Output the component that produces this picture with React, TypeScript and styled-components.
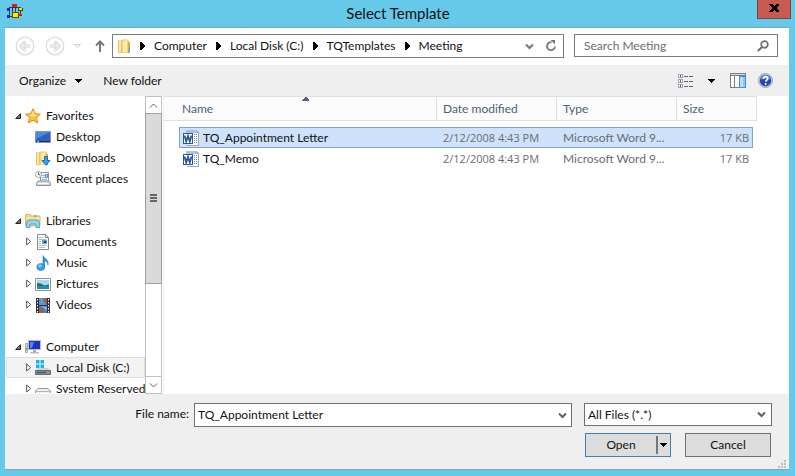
import React from "react";
import styled, { createGlobalStyle, css } from "styled-components";

const GlobalStyle = createGlobalStyle`
  * { box-sizing: border-box; }
  html, body { margin: 0; }
  body, button, input, select {
    font-family: Lato, "Open Sans", sans-serif;
    font-size: 12px;
    line-height: 16px;
    color: #111;
  }
  button, input, select { margin: 0; padding: 0; border-radius: 0; }
  svg { display: block; flex: none; }
`;

const Window = styled.div`
  display: flex;
  flex-direction: column;
  min-height: 100vh;
  padding: 0 6px 6px 5px;
  background: #66c9ea;
`;

const TitleBar = styled.header`
  display: grid;
  grid-template-columns: 34px 1fr 34px;
  height: 27px;
  margin-right: -2px;
`;

const AppIcon = styled.span`
  padding: 4px 0 0 2px;
`;

const Title = styled.h1`
  margin: 0;
  text-align: center;
  font-size: 15px;
  font-weight: 400;
  line-height: 26px;
`;

const CloseButton = styled.button`
  display: flex;
  align-items: center;
  justify-content: center;
  height: 19px;
  padding-bottom: 3px;
  border: 1px solid #6f4a49;
  border-top: 0;
  background: #c75b52;
`;

const Body = styled.main`
  display: flex;
  flex: 1;
  flex-direction: column;
  border-top: 1px solid #7fa6b5;
  border-bottom: 1px solid #7fa6b5;
  background: #efefef;
`;

const NavBar = styled.nav`
  display: flex;
  height: 37px;
  padding: 6px 11px 0 10px;
  background: #fff;
`;

const NavButtons = styled.div`
  display: flex;
  align-items: center;
  height: 24px;
  width: 97px;
`;

const PlainButton = styled.button<{ $gap?: number }>`
  display: inline-flex;
  align-items: center;
  margin-right: ${(p) => p.$gap ?? 0}px;
  border: 0;
  background: none;
  white-space: nowrap;
`;

const AddressBar = styled.div`
  display: flex;
  flex: 1;
  align-items: center;
  height: 24px;
  margin-right: 10px;
  padding: 0 6px 0 4px;
  border: 1px solid #7b7b7b;
`;

const Crumbs = styled.ol`
  display: flex;
  flex: 1;
  margin: 0;
  padding: 0 0 0 7px;
  list-style: none;
`;

const Crumb = styled.li`
  display: flex;
  align-items: center;
  gap: 9px;
  padding-right: 9px;
`;

const CrumbLink = styled.a`
  color: inherit;
  text-decoration: none;
  white-space: nowrap;
`;

const SearchBox = styled.label`
  display: flex;
  align-items: center;
  width: 204px;
  height: 23px;
  padding: 0 8px 0 9px;
  border: 1px solid #7b7b7b;
`;

const TextInput = styled.input`
  flex: 1;
  min-width: 0;
  border: 0;
  outline: 0;
  background: transparent;
  &::placeholder {
    color: #6d6d6d;
    opacity: 1;
  }
`;

const Toolbar = styled.div`
  display: flex;
  align-items: center;
  height: 31px;
  padding: 0 16px 0 14px;
`;

const Spacer = styled.span`
  flex: 1;
`;

const Content = styled.div`
  display: flex;
  flex: 1 1 0;
  min-height: 0;
  background: #fff;
`;

const Tree = styled.ul`
  width: 140px;
  height: 297px;
  margin: 0;
  padding: 9px 0 0 1px;
  overflow: hidden;
  list-style: none;
`;

const TreeGroup = styled.li`
  margin-bottom: 21px;
`;

const TreeChildren = styled.ul`
  margin: 0;
  padding: 0;
  list-style: none;
`;

const TreeRow = styled.button<{ $child?: boolean; $selected?: boolean }>`
  display: grid;
  grid-template-columns: ${(p) => (p.$child ? 9 : 10)}px 16px 1fr;
  align-items: center;
  width: 100%;
  height: 21px;
  padding: 0 0 0 ${(p) => (p.$child ? 19 : 8)}px;
  border: 1px solid ${(p) => (p.$selected ? "#dedede" : "transparent")};
  background: ${(p) => (p.$selected ? "#f3f3f3" : "transparent")};
  text-align: left;
  white-space: nowrap;
`;

const TreeLabel = styled.span`
  padding-left: 5px;
`;

const ScrollBar = styled.div`
  display: flex;
  flex-direction: column;
  width: 17px;
  border: 1px solid #c1c1c1;
`;

const ScrollButton = styled.button`
  display: flex;
  align-items: center;
  justify-content: center;
  height: 16px;
  border: 0;
  background: #fff;
`;

const ScrollTrack = styled.div`
  flex: 1;
  border-bottom: 1px solid #c1c1c1;
`;

const ScrollThumb = styled.div`
  display: flex;
  align-items: center;
  justify-content: center;
  height: 65%;
  margin: 0 -1px;
  border: 1px solid #a0a0a0;
  background: #dadada;
`;

const FileArea = styled.section`
  flex: 1;
  margin-left: 1px;
  padding-right: 32px;
  border-left: 1px solid #f2f2f2;
`;

const FileTable = styled.table`
  width: 100%;
  border-spacing: 0;
  table-layout: fixed;
  tbody::before {
    content: "";
    display: table-row;
    height: 6px;
  }
`;

const Col = styled.col<{ $w?: number }>`
  width: ${(p) => (p.$w ? `${p.$w}px` : "auto")};
`;

const HeadCell = styled.th<{ $indent?: number }>`
  height: 25px;
  padding: 0 0 0 ${(p) => p.$indent ?? 6}px;
  border: solid #e0e0e0;
  border-width: 1px 1px 1px 0;
  background: #fcfcfc;
  color: #4c607a;
  font-weight: 400;
  text-align: left;
`;

const SortHead = styled.span`
  display: grid;
  grid-template-columns: 1fr;
  align-items: center;
  height: 23px;
  > * { grid-area: 1 / 1; }
  > svg { place-self: start center; margin-right: 6px; }
`;

const edge = "#7da2ce";

const Row = styled.tr<{ $selected?: boolean }>`
  td {
    height: 21px;
    padding: 0 4px 0 6px;
    border: 1px solid transparent;
    border-width: 1px 0;
    color: #6d6d6d;
    overflow: hidden;
    text-overflow: ellipsis;
    white-space: nowrap;
  }
  td:nth-child(2) {
    padding-left: 3px;
    border-left-width: 1px;
    color: #111;
  }
  td:nth-child(5) {
    padding: 0 3px 0 0;
    border-right-width: 1px;
    text-align: right;
  }
  td:nth-child(3),
  td:nth-child(5) {
    font-family: "Open Sans", sans-serif;
    font-size: 11px;
  }
  ${(p) =>
    p.$selected &&
    css`
      td:not(:first-child):not(:last-child) {
        border-color: ${edge};
        background: #cee2fc;
      }
    `}
`;

const FileName = styled.span`
  display: flex;
  align-items: center;
  gap: 4px;
`;

const Footer = styled.form`
  display: grid;
  grid-template-columns: 185px minmax(0, 1fr) 188px;
  grid-template-rows: 24px 24px;
  row-gap: 6px;
  height: 75px;
  padding: 9px 17px 0 0;
`;

const FieldLabel = styled.label`
  justify-self: end;
  margin-right: 1px;
  line-height: 22px;
`;

const Combo = styled.div`
  display: flex;
  align-items: center;
  margin: 0 12px 0 4px;
  padding: 0 4px 0 3px;
  border: 1px solid #707070;
  background: #fff;
`;

const FilterField = styled.div`
  display: grid;
  grid-template-columns: 1fr 14px;
  align-items: center;
  height: 23px;
  border: 1px solid #707070;
  background: #fff;
  > svg {
    grid-area: 1 / 2;
    pointer-events: none;
  }
`;

const Filter = styled.select`
  grid-area: 1 / 1 / 2 / 3;
  height: 21px;
  padding-left: 3px;
  border: 0;
  outline: 0;
  appearance: none;
  background: transparent;
`;

const Actions = styled.div`
  display: grid;
  grid-column: 3;
  grid-template-columns: 86px 86px;
  gap: 14px;
  margin-left: 1px;
`;

const SplitButton = styled.div`
  display: flex;
  border: 1px solid #3c7fb1;
  background: #ddd;
`;

const OpenButton = styled.button`
  flex: 1;
  border: 0;
  background: none;
`;

const OpenMenuButton = styled.button`
  display: flex;
  align-items: center;
  width: 14px;
  margin: 2px 0;
  padding-left: 1px;
  border: 0;
  border-left: 2px solid #777;
  background: none;
`;

const CancelButton = styled.button`
  border: 1px solid #707070;
  background: #ddd;
`;

const Grip = styled.span`
  grid-column: 3;
  grid-row: 3;
  justify-self: end;
  margin: -3px -15px 0 0;
`;

/* ---------- icons ---------- */

const Icon = ({ w = 16, h = 16, crisp, children }: { w?: number; h?: number; crisp?: boolean; children: React.ReactNode }) => (
  <svg width={w} height={h} viewBox={`0 0 ${w} ${h}`} fill="none" aria-hidden="true" shapeRendering={crisp ? "crispEdges" : undefined}>
    {children}
  </svg>
);

const NetIcon = () => (
  <Icon w={17} h={16} crisp>
    <path d="M2.500 5v8M2 3.500h12M5.500 2v8M13.500 6v5M8.500 3v6M2 12.500h8" stroke="#333a44" />
    <path d="M5 0h5v3H5z" fill="#e01818" />
    <path d="M11 4h5v3h-5z" fill="#4c4400" />
    <path d="M12 4h3v2h-3z" fill="#f5e400" />
    <path d="M5 8h7v6H5z" fill="#5a5200" />
    <path d="M6 9h5v4H6z" fill="#ffe800" />
    <path d="M0 4h3v3H0zM0 11h3v3H0z" fill="#1a2cb8" />
    <path d="M12 10h3v2h-3z" fill="#e01818" />
  </Icon>
);

const CloseIcon = () => (
  <Icon w={10} h={8} crisp>
    <path d="M0 0h3l2 2 2-2h3v1L7 4l3 3v1H7L5 6 3 8H0V7l3-3-3-3z" fill="#000" />
  </Icon>
);

const CircleArrow = ({ flip }: { flip?: boolean }) => (
  <Icon w={20} h={20}>
    <circle cx="10" cy="10" r="8.8" stroke="#d9d9d9" strokeWidth="1.2" />
    <g transform={flip ? "matrix(-1 0 0 1 20 0)" : undefined}>
      <path d="M10.500 5.500 6 10l4.500 4.500M6.500 10H15" stroke="#d4d4d4" strokeWidth="3" />
      <path d="M10.500 5.500 6 10l4.500 4.500M6 10h8.500" stroke="#fff" />
    </g>
  </Icon>
);

const SmallTriangle = () => (
  <Icon w={7} h={4}>
    <path d="M.5.5h6l-3 3z" stroke="#cfcfcf" />
  </Icon>
);

const UpArrow = () => (
  <Icon w={10} h={12}>
    <path d="M5 12V2M1 5.500 5 1.500l4 4" stroke="#777" strokeWidth="2" />
  </Icon>
);

const FolderShape = () => (
  <>
    <path d="M1 2h5v13H1z" fill="#e8c568" />
    <path d="M2 2h2v12H2z" fill="#f8e6a3" />
    <path d="M6 1l6 1v13H5V4z" fill="#efd27c" />
    <path d="M6 3l4-1v12l-4 1z" fill="#fae9aa" />
    <path d="M12 4h1v11h-2V5z" fill="#d5ab42" />
  </>
);

const FolderIcon = () => (
  <Icon>
    <FolderShape />
    <path d="M12 10h1v4h-2z" fill="#5aaee8" />
  </Icon>
);

const RightTriangle = () => (
  <Icon w={5} h={8} crisp>
    <path d="M0 0h1l4 4-4 4H0z" fill="#000" />
  </Icon>
);

const Chevron = ({ up, color = "#606060", thick = 2 }: { up?: boolean; color?: string; thick?: number }) => (
  <Icon w={9} h={7}>
    <path d={up ? "M1 5.500l3.500-3.500L8 5.500" : "M1 1.500 4.500 5 8 1.500"} stroke={color} strokeWidth={thick} />
  </Icon>
);

const RefreshIcon = () => (
  <Icon w={12} h={12}>
    <path d="M6.500 2.200A4 4 0 1 0 10 6.500" stroke="#777" strokeWidth="1.800" />
    <path d="M5.500 0H10v4.500z" fill="#777" />
  </Icon>
);

const SearchIcon = () => (
  <Icon w={12} h={12}>
    <circle cx="7.500" cy="4.500" r="3.300" stroke="#707070" strokeWidth="1.700" />
    <path d="M5 7 .8 11" stroke="#707070" strokeWidth="2" />
  </Icon>
);

const DownTriangle = () => (
  <Icon w={8} h={4} crisp>
    <path d="M0 0h8L4 4z" fill="#000" />
  </Icon>
);

const ViewIcon = () => (
  <Icon w={16} h={14} crisp>
    {[0, 5, 10].map((y, i) => (
      <g key={y}>
        <path d={`M.5 ${y + 0.5}h4v3h-4z`} stroke="#a0a7b4" fill="#fff" />
        <path d={`M2 ${y + 1}h1v2H2z`} fill={i === 1 ? "#b84646" : "#53627a"} />
        <path d={`M6 ${y + 2}h4v1H6zM11 ${y + 2}h4v1h-4z`} fill="#59657a" />
      </g>
    ))}
  </Icon>
);

const PaneIcon = () => (
  <Icon w={16} h={16} crisp>
    <path d="M0 0h16v15H0z" fill="#7a7f86" />
    <path d="M1 3h3v11H1zM5 3h4v11H5z" fill="#fff" />
    <path d="M1 1h14v1H1z" fill="#d4dbe3" />
    <path d="M9 3h7v12H9z" fill="#3b91df" />
    <path d="M10 4h5v10h-5z" fill="#b9defc" />
    <path d="M13 4h2v10h-2z" fill="#8fc8f7" />
  </Icon>
);

const HelpIcon = () => (
  <Icon w={15} h={15}>
    <circle cx="7.500" cy="7.500" r="7" fill="#c8ccd8" stroke="#8d93a8" strokeWidth=".8" />
    <circle cx="7.500" cy="7.500" r="5.700" fill="#2447b5" />
    <path d="M2.500 7a5 5 0 0 1 10 0c-3-1.500-7-1.500-10 0z" fill="#5a85e0" />
    <path d="M5.400 5.700c0-3 4.400-2.700 4.300-.2 0 1.500-2 1.600-2 3.300" stroke="#fff" strokeWidth="1.700" />
    <circle cx="7.700" cy="10.900" r="1" fill="#fff" />
  </Icon>
);

const ExpandedIcon = () => (
  <Icon w={6} h={6}>
    <path d="M5.500.7v4.800H.7z" fill="#777" stroke="#222" />
  </Icon>
);

const CollapsedIcon = () => (
  <Icon w={6} h={9}>
    <path d="M.7 1v7l4-3.500z" fill="#fff" stroke="#555" />
  </Icon>
);

const StarIcon = () => (
  <Icon>
    <path d="M8 .8l2.200 4.800 5.200.6-3.900 3.500 1.100 5.200L8 12.300l-4.600 2.600 1.100-5.200L.6 6.200l5.200-.6z" fill="#fbc337" stroke="#e08a26" />
    <path d="M8 2.500l1.500 3.900 3.700.4-5.200 2L3 7l3.500-.6z" fill="#ffe68c" />
  </Icon>
);

const DesktopIcon = () => (
  <Icon>
    <path d="M.5 2.500h15v11H.5z" fill="#2a63c0" stroke="#8b97a8" />
    <path d="M1 3h14L1 10z" fill="#4b8be0" />
    <path d="M1 12h14v1H1z" fill="#1b2c50" />
    <path d="M2 12h2v1H2z" fill="#5fd0f0" />
  </Icon>
);

const DownloadsIcon = () => (
  <Icon>
    <FolderShape />
    <path d="M9.500 6.500h3v4h2.500L11 15.300 7 10.500h2.500z" fill="#3da2e8" stroke="#176fb8" />
  </Icon>
);

const RecentIcon = () => (
  <Icon>
    <path d="M5.500 1.500h8v9h-8z" fill="#f3f5f7" stroke="#8d969e" />
    <path d="M7 4.500h3M7 6.500h3M7 8.500h5" stroke="#9fb3c4" />
    <path d="M10.500 3.500h2v3h-2z" fill="#bfe0f5" stroke="#4b94cb" />
    <path d="M3 10h11l1.500 2.500v2H1.500v-2z" fill="#d5d8da" stroke="#8d9499" />
    <path d="M3.500 12.500h10" stroke="#fff" />
    <circle cx="3.500" cy="3.500" r="3" fill="#fff" stroke="#9aa2a9" />
    <path d="M3.500 1.500v2.300h1.700" stroke="#4d5d6d" />
  </Icon>
);

const LibraryIcon = () => (
  <Icon>
    <path d="M.5 1.500h5l1 1.500h8.500v10H.5z" fill="#f4d77e" stroke="#d9b964" />
    <path d="M1 5h14" stroke="#fff3c0" />
    <path d="M9 3h3" stroke="#48a15c" />
    <path d="M1.500 14.500V11q0-4 3.500-4h6q3.500 0 3.500 4v3.500h-3.500V11H5v3.500z" fill="#9bd6f0" stroke="#4ea3d0" />
  </Icon>
);

const DocumentIcon = () => (
  <Icon>
    <path d="M2.500.5h8l3 3v12h-11z" fill="#fff" stroke="#858c94" />
    <path d="M10.500.5v3h3" stroke="#858c94" />
    <path d="M4 3.500h4M4 5.500h7M4 7.500h2M4 9.500h2M4 11.500h8M4 13.500h6" stroke="#b5bbc3" />
    <path d="M7 6h5v4H7z" fill="#5ea3e4" />
    <path d="M9 7h2v2H9z" fill="#173a78" />
  </Icon>
);

const MusicIcon = () => (
  <Icon>
    <path d="M8 .5c1 3 6 3.500 5 9.500 0-3-2-3.800-3.500-4v6H8z" fill="#2a93d8" stroke="#2181c4" strokeWidth=".6" />
    <ellipse cx="5.800" cy="12" rx="4" ry="3.400" fill="#38a0e2" stroke="#1f78b8" strokeWidth=".7" />
    <ellipse cx="5" cy="10.800" rx="2" ry="1.200" fill="#8dd2f7" />
  </Icon>
);

const PictureIcon = () => (
  <Icon>
    <path d="M.5 2.500h15v12H.5z" fill="#fff" stroke="#8b9299" />
    <path d="M2 4h12v9H2z" fill="#a3daf4" />
    <path d="M2 7q5 0 7 2.500l5-1v2H2z" fill="#2d6d50" />
    <path d="M2 10h12v3H2z" fill="#2289b7" />
  </Icon>
);

const VideoIcon = () => (
  <Icon>
    <path d="M1 1h14v15H1z" fill="#2b3036" />
    <path d="M4 1h8v7H4z" fill="#5b9bd1" />
    <path d="M4 9h8v7H4z" fill="#3f86c4" />
    <path d="M8 1h4v7l-3-3zM4 12l4-2 2 3-3 3H4z" fill="#a85a49" />
    <path d="M6 9l6 1v4z" fill="#5ac0ee" />
    <path d="M2.500 2v14M13.500 2v14" stroke="#fff" strokeWidth="1" strokeDasharray="1.500 1.500" />
  </Icon>
);

const ComputerIcon = () => (
  <Icon>
    <path d="M.5 4.500h2v9h-2z" fill="#d7dade" stroke="#a3a9b0" />
    <path d="M1 9h1v2H1z" fill="#54b654" />
    <path d="M3.500 1.500h12v9h-12z" fill="#1b35c0" stroke="#b7bdc5" />
    <path d="M5 3h4l-2 6H5z" fill="#5686ec" />
    <path d="M8 11h3v2H8z" fill="#a5abb3" />
    <path d="M5 13h9v1.500H5z" fill="#b7bdc5" />
  </Icon>
);

const DriveShape = () => (
  <>
    <path d="M3 8h10l3 3H0z" fill="#cfd3d6" />
    <path d="M.5 10.500h15v4H.5z" fill="#7d888e" stroke="#676f75" />
    <path d="M2 12.500h9" stroke="#4a575d" />
    <path d="M12 12h2v1h-2z" fill="#50dc72" />
  </>
);

const SystemDriveIcon = () => (
  <Icon>
    <DriveShape />
    <path d="M1 0h3.500v3.500H1zM5.500 0H9v3.500H5.500zM1 4.500h3.500V8H1zM5.500 4.500H9V8H5.500z" fill="#17b4ee" />
  </Icon>
);

const DriveIcon = () => (
  <Icon>
    <path d="M3 7.500h10l2.500 2.500v4.500H.5V10z" fill="#f0f0f0" stroke="#92979b" />
    <path d="M1 10.500h14M2 12.500h9" stroke="#b5babd" />
    <path d="M12 12h2v1h-2z" fill="#50dc72" />
  </Icon>
);

const WordIcon = () => (
  <Icon>
    <path d="M3 0h10v14H3z" fill="#a9c1ea" />
    <path d="M6 3h9v12H6z" fill="#fff" />
    <path d="M4 0h9l3 2v14H4v-1h11V3H3V0z" fill="#a2a7b5" />
    <path d="M3 0h10l1 2v1H3z" fill="#a9c1ea" />
    <path d="M11 4h1v1h-1zM11 6h1v1h-1zM11 8h1v1h-1zM11 10h1v1h-1zM11 12h1v1h-1zM13 4h1v1h-1zM13 6h1v1h-1zM13 8h1v1h-1zM13 10h1v1h-1zM13 12h1v1h-1z" fill="#73849d" />
    <path d="M0 3h10v11H0z" fill="#2b579a" />
    <path d="M1 4h8v9H1z" fill="#fff" />
    <path d="M1.500 5.500 3.200 11.500 5 6 6.800 11.500 8.500 5.500" stroke="#2b579a" strokeWidth="1.800" />
  </Icon>
);

const SortIcon = () => (
  <Icon w={7} h={4} crisp>
    <path d="M0 4h7V3L4 0H3L0 3z" fill="#4c607a" />
  </Icon>
);

const ThumbGrip = () => (
  <Icon w={7} h={8} crisp>
    <path d="M0 0h7v2H0zM0 3h7v2H0zM0 6h7v2H0z" fill="#666" />
  </Icon>
);

const ResizeGrip = () => (
  <Icon w={9} h={9} crisp>
    <path d="M6 0h2v2H6zM3 3h2v2H3zM6 3h2v2H6zM0 6h2v2H0zM3 6h2v2H3zM6 6h2v2H6z" fill="#bdbdbd" />
  </Icon>
);

/* ---------- data ---------- */

const crumbs = ["Computer", "Local Disk (C:)", "TQTemplates", "Meeting"];

type TreeItem = { name: string; icon: React.ReactNode; selected?: boolean };
type Group = { name: string; icon: React.ReactNode; leaf?: boolean; items: TreeItem[] };

const groups: Group[] = [
  {
    name: "Favorites",
    icon: <StarIcon />,
    leaf: true,
    items: [
      { name: "Desktop", icon: <DesktopIcon /> },
      { name: "Downloads", icon: <DownloadsIcon /> },
      { name: "Recent places", icon: <RecentIcon /> },
    ],
  },
  {
    name: "Libraries",
    icon: <LibraryIcon />,
    items: [
      { name: "Documents", icon: <DocumentIcon /> },
      { name: "Music", icon: <MusicIcon /> },
      { name: "Pictures", icon: <PictureIcon /> },
      { name: "Videos", icon: <VideoIcon /> },
    ],
  },
  {
    name: "Computer",
    icon: <ComputerIcon />,
    items: [
      { name: "Local Disk (C:)", icon: <SystemDriveIcon />, selected: true },
      { name: "System Reserved", icon: <DriveIcon /> },
    ],
  },
];

const files = [
  { name: "TQ_Appointment Letter", date: "2/12/2008 4:43 PM", type: "Microsoft Word 9...", size: "17 KB", selected: true },
  { name: "TQ_Memo", date: "2/12/2008 4:43 PM", type: "Microsoft Word 9...", size: "17 KB", selected: false },
];

export default function App() {
  return (
    <>
      <GlobalStyle />
      <Window>
        <TitleBar>
          <AppIcon><NetIcon /></AppIcon>
          <Title>Select Template</Title>
          <CloseButton aria-label="Close"><CloseIcon /></CloseButton>
        </TitleBar>
        <Body>
          <NavBar>
            <NavButtons>
              <PlainButton aria-label="Back" $gap={10}><CircleArrow /></PlainButton>
              <PlainButton aria-label="Forward" $gap={9}><CircleArrow flip /></PlainButton>
              <PlainButton aria-label="Recent locations" $gap={14}><SmallTriangle /></PlainButton>
              <PlainButton aria-label="Up"><UpArrow /></PlainButton>
            </NavButtons>
            <AddressBar>
              <FolderIcon />
              <Crumbs>
                {crumbs.map((c) => (
                  <Crumb key={c}>
                    <RightTriangle />
                    <CrumbLink href="#">{c}</CrumbLink>
                  </Crumb>
                ))}
              </Crumbs>
              <PlainButton aria-label="Previous locations" $gap={11}><Chevron color="#777" /></PlainButton>
              <PlainButton aria-label="Refresh"><RefreshIcon /></PlainButton>
            </AddressBar>
            <SearchBox>
              <TextInput type="search" aria-label="Search Meeting" placeholder="Search Meeting" />
              <SearchIcon />
            </SearchBox>
          </NavBar>
          <Toolbar>
            <PlainButton $gap={8}>Organize</PlainButton>
            <PlainButton aria-label="Organize menu" $gap={21}><DownTriangle /></PlainButton>
            <PlainButton>New folder</PlainButton>
            <Spacer />
            <PlainButton aria-label="Change view" $gap={13}><ViewIcon /></PlainButton>
            <PlainButton aria-label="View options" $gap={15}><DownTriangle /></PlainButton>
            <PlainButton aria-label="Preview pane" $gap={12}><PaneIcon /></PlainButton>
            <PlainButton aria-label="Help"><HelpIcon /></PlainButton>
          </Toolbar>
          <Content>
            <Tree>
              {groups.map((g) => (
                <TreeGroup key={g.name}>
                  <TreeRow aria-expanded="true">
                    <ExpandedIcon />
                    {g.icon}
                    <TreeLabel>{g.name}</TreeLabel>
                  </TreeRow>
                  <TreeChildren>
                    {g.items.map((it) => (
                      <li key={it.name}>
                        <TreeRow $child $selected={it.selected}>
                          {g.leaf ? <span /> : <CollapsedIcon />}
                          {it.icon}
                          <TreeLabel>{it.name}</TreeLabel>
                        </TreeRow>
                      </li>
                    ))}
                  </TreeChildren>
                </TreeGroup>
              ))}
            </Tree>
            <ScrollBar>
              <ScrollButton aria-label="Scroll up"><Chevron up thick={1} /></ScrollButton>
              <ScrollTrack>
                <ScrollThumb><ThumbGrip /></ScrollThumb>
              </ScrollTrack>
              <ScrollButton aria-label="Scroll down"><Chevron thick={1} /></ScrollButton>
            </ScrollBar>
            <FileArea>
              <FileTable>
                <colgroup>
                  <Col $w={15} />
                  <Col />
                  <Col $w={120} />
                  <Col $w={120} />
                  <Col $w={76} />
                  <Col $w={4} />
                </colgroup>
                <thead>
                  <tr>
                    <HeadCell colSpan={2} $indent={18}>
                      <SortHead>
                        <span>Name</span>
                        <SortIcon />
                      </SortHead>
                    </HeadCell>
                    <HeadCell>Date modified</HeadCell>
                    <HeadCell>Type</HeadCell>
                    <HeadCell colSpan={2}>Size</HeadCell>
                  </tr>
                </thead>
                <tbody>
                  {files.map((f) => (
                    <Row key={f.name} $selected={f.selected}>
                      <td />
                      <td>
                        <FileName>
                          <WordIcon />
                          {f.name}
                        </FileName>
                      </td>
                      <td>{f.date}</td>
                      <td>{f.type}</td>
                      <td>{f.size}</td>
                      <td />
                    </Row>
                  ))}
                </tbody>
              </FileTable>
            </FileArea>
          </Content>
          <Footer onSubmit={(e) => e.preventDefault()}>
            <FieldLabel htmlFor="file-name">File name:</FieldLabel>
            <Combo>
              <TextInput id="file-name" type="text" defaultValue="TQ_Appointment Letter" />
              <PlainButton type="button" aria-label="Recent file names"><Chevron /></PlainButton>
            </Combo>
            <FilterField>
              <Filter aria-label="File type">
                <option>All Files (*.*)</option>
              </Filter>
              <Chevron />
            </FilterField>
            <Actions>
              <SplitButton>
                <OpenButton type="submit">Open</OpenButton>
                <OpenMenuButton type="button" aria-label="Open options"><DownTriangle /></OpenMenuButton>
              </SplitButton>
              <CancelButton type="button">Cancel</CancelButton>
            </Actions>
            <Grip><ResizeGrip /></Grip>
          </Footer>
        </Body>
      </Window>
    </>
  );
}
